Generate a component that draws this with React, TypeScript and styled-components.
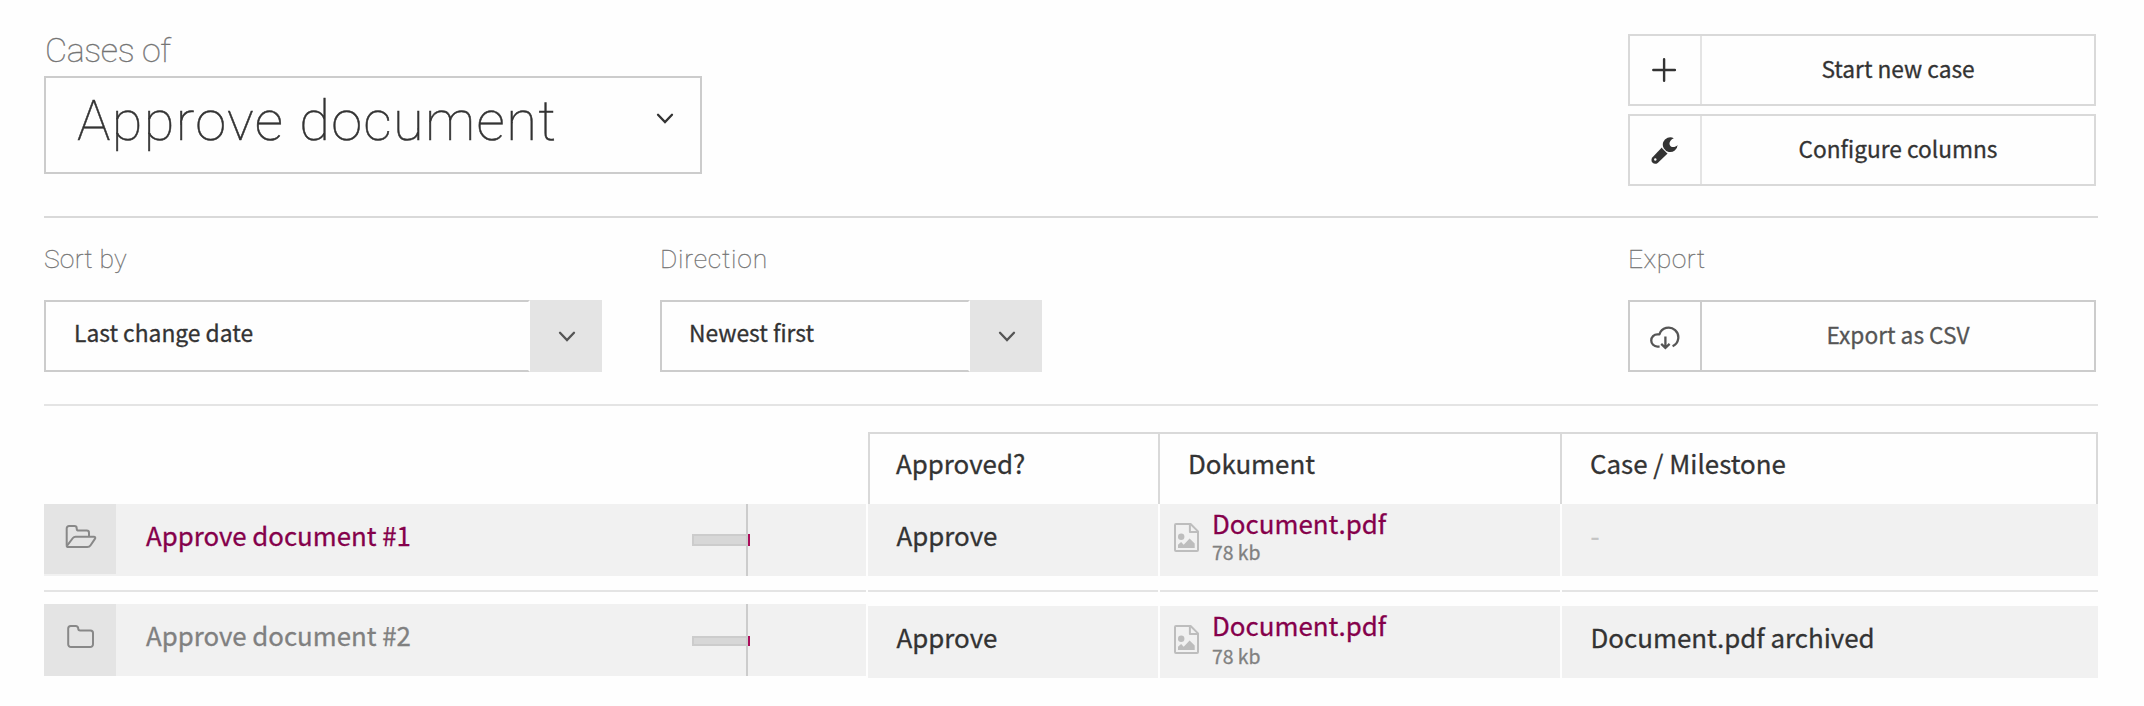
import React from 'react';
import styled, { createGlobalStyle } from 'styled-components';

const sans = '"Noto Sans CJK SC", "Open Sans", sans-serif';
const light = 'Roboto, "Open Sans", sans-serif';

const GlobalStyle = createGlobalStyle`
  * { box-sizing: border-box; }
  body { margin: 0; background: #fefefe; color: #333; font-family: ${sans}; }
  svg { display: block; flex: none; }
`;

const Page = styled.main`
  width: 2144px;
  height: 706px;
  padding: 0 46px 0 44px;
  overflow: hidden;
  -webkit-text-stroke: 0.3px currentColor;
`;

const Header = styled.header`
  display: flex;
  justify-content: space-between;
  height: 218px;
  border-bottom: 2px solid #d9d9d9;
`;

const TitleBlock = styled.div`
  width: 658px;
  padding-top: 28px;
`;

const TitleLabel = styled.div`
  height: 48px;
  padding-left: 1px;
  font: 100 34px/44px ${light};
  color: #6c6c6c;
  -webkit-text-stroke: 0.4px #7a7a7a;
  letter-spacing: -0.35px;
`;

const TitleSelect = styled.div`
  display: flex;
  align-items: center;
  justify-content: space-between;
  height: 98px;
  padding: 0 26px 8px 31px;
  border: 2px solid #ccc;
  font: 100 56px/80px ${light};
  letter-spacing: 1.35px;
  -webkit-text-stroke: 0.5px #333;
  white-space: nowrap;

  svg { margin-bottom: 5px; }
`;

const Actions = styled.div`
  display: flex;
  flex-direction: column;
  gap: 8px;
  width: 468px;
  margin-right: 2px;
  padding-top: 34px;
`;

const Button = styled.button<{ $strong?: boolean }>`
  display: flex;
  width: 468px;
  height: 72px;
  padding: 0;
  border: 2px solid ${p => (p.$strong ? '#ccc' : '#d9d9d9')};
  background: none;
  color: ${p => (p.$strong ? '#555' : '#333')};
  font: 400 22.7px/30px ${sans};
  -webkit-text-stroke: 0.3px currentColor;
`;

const ButtonIcon = styled.span<{ $strong?: boolean }>`
  display: flex;
  align-items: center;
  justify-content: center;
  width: 72px;
  height: 68px;
  border-right: 2px solid ${p => (p.$strong ? '#ccc' : '#e4e4e4')};
`;

const ButtonText = styled.span`
  flex: 1;
  padding-top: 18px;
  text-align: center;
`;

const Filters = styled.section`
  display: flex;
  height: 188px;
  border-bottom: 2px solid #e4e4e4;
`;

const Field = styled.div<{ $width: number; $gap?: number }>`
  width: ${p => p.$width}px;
  margin-right: ${p => p.$gap ?? 0}px;
  padding-top: 25px;
`;

const ExportField = styled(Field)`
  margin-left: auto;
`;

const FieldLabel = styled.div<{ $spacing?: number }>`
  height: 57px;
  font: 100 26.5px/32px ${light};
  color: #6c6c6c;
  -webkit-text-stroke: 0.3px #7a7a7a;
  letter-spacing: ${p => p.$spacing ?? 0}px;
`;

const Select = styled.div`
  display: flex;
  height: 72px;
`;

const SelectValue = styled.div<{ $pad: number }>`
  flex: 1;
  padding: 16px 0 0 ${p => p.$pad}px;
  border: 2px solid #ccc;
  border-right-color: #fefefe;
  font-size: 22.8px;
  line-height: 30px;
`;

const SelectArrow = styled.div`
  display: flex;
  align-items: center;
  justify-content: center;
  width: 72px;
  padding-left: 1px;
  background: #e4e4e4;
  color: #555;
`;

const Table = styled.section`
  padding-top: 26px;
`;

const HeadRow = styled.div`
  display: grid;
  grid-template-columns: 290px 402px 538px;
  margin-left: 824px;
  height: 72px;
  border-top: 2px solid #d9d9d9;
  border-right: 2px solid #d9d9d9;
`;

const HeadCell = styled.div<{ $pad: number }>`
  padding: 14px 0 0 ${p => p.$pad}px;
  border-left: 2px solid #d9d9d9;
  font-size: 25.9px;
  line-height: 30px;
`;

const Row = styled.div`
  display: grid;
  grid-template-columns: 822px 290px 400px 536px;
  column-gap: 2px;
`;

const Separator = styled(Row)`
  height: 2px;
  margin: 14px 0 12px;
`;

const SeparatorPart = styled.span`
  background: #e4e4e4;
`;

const Cell = styled.div<{ $drop?: boolean; $muted?: boolean }>`
  height: 72px;
  margin-top: ${p => (p.$drop ? 2 : 0)}px;
  padding: 16px 0 0 28.5px;
  background: #f1f1f1;
  color: ${p => (p.$muted ? '#c4c4c4' : '#333')};
  font-size: 25.9px;
  line-height: 30px;
`;

const NameCell = styled.div`
  display: flex;
  height: 72px;
  background: #f1f1f1;
`;

const FolderBox = styled.div<{ $open?: boolean }>`
  display: flex;
  align-items: center;
  justify-content: center;
  width: 72px;
  height: ${p => (p.$open ? 70 : 72)}px;
  padding: 0 0 ${p => (p.$open ? 4 : 6)}px ${p => (p.$open ? 2 : 0)}px;
  background: #e4e4e4;
  color: #888;
`;

const CaseName = styled.div<{ $open?: boolean }>`
  flex: 1;
  padding: 16px 0 0 30px;
  color: ${p => (p.$open ? '#85004b' : '#808080')};
  font-size: 25.8px;
  line-height: 30px;
`;

const Timeline = styled.div`
  display: flex;
  width: 58px;
  margin-right: 116px;
`;

const Span = styled.div<{ $top: number; $height: number }>`
  width: 54px;
  height: ${p => p.$height}px;
  margin-top: ${p => p.$top}px;
  border: 2px solid #ccc;
  border-right: 0;
  background: #d7d7d7;
`;

const Today = styled.div`
  width: 2px;
  background: #ccc;
`;

const Tick = styled.div<{ $top: number; $height: number }>`
  width: 2px;
  height: ${p => p.$height}px;
  margin-top: ${p => p.$top}px;
  background: #ab0c5a;
`;

const FileCell = styled(Cell)`
  display: flex;
  gap: 12px;
  padding: 4px 0 0 14px;
`;

const FileIconBox = styled.div`
  padding-top: 15px;
`;

const FileName = styled.div`
  color: #85004b;
`;

const FileSize = styled.div<{ $gap: number }>`
  margin-top: ${p => p.$gap}px;
  color: #808080;
  font-size: 19.4px;
  line-height: 23px;
`;

const Chevron = () => (
  <svg width="18" height="11" viewBox="0 0 18 11" fill="none" stroke="currentColor" strokeWidth="2.3" strokeLinecap="round">
    <path d="M2 1.8 9 9l7-7.2" />
  </svg>
);

const PlusIcon = () => (
  <svg width="30" height="30" viewBox="0 0 30 30" stroke="#333" strokeWidth="2.4" strokeLinecap="round">
    <path d="M14.1 4.2v21.6M3.3 15h21.6" />
  </svg>
);

const WrenchIcon = () => (
  <svg width="30" height="30" viewBox="0 0 30 30">
    <path d="M23.8 3.2A7.4 7.4 0 1 0 27.6 10C25.6 12.2 22.6 12.8 20.6 11.2 18.4 9.2 19.4 5 23.8 3.2Z" fill="#333" />
    <path d="m11.8 12.6 5.8 5.8-9.9 9.5c-3.6 2.8-8.2-1.6-5.4-5.4Z" fill="#333" />
    <path d="m11.8 12.6 6 6" stroke="#fefefe" strokeWidth="0.6" />
    <circle cx="5.3" cy="24.5" r="1.2" fill="#fefefe" />
  </svg>
);

const CloudIcon = () => (
  <svg width="30" height="30" viewBox="0 0 30 30" fill="none" stroke="#555" strokeWidth="2.3">
    <path d="M9.6 25.6H7.4a6.1 6.1 0 0 1 0-12.3h2A9.7 9.7 0 1 1 22.6 25.2" strokeLinejoin="round" />
    <path d="M15.4 15.4v11.4M11.2 22.8l4.2 4 4.2-4" />
  </svg>
);

const FolderOpenIcon = () => (
  <svg width="32" height="26" viewBox="0 0 32 26" fill="none" stroke="currentColor" strokeWidth="2" strokeLinejoin="round">
    <path d="M1.7 21.5V4.4a2.3 2.3 0 0 1 2.3-2.3h5.4a2.3 2.3 0 0 1 2.3 2.3 2.2 2.2 0 0 0 2.2 2.2h7.8a2.3 2.3 0 0 1 2.3 2.3v3.7" />
    <path d="M1.9 21.8 7.9 14a3.3 3.3 0 0 1 2.6-1.3h18.2c1.6 0 2 1 1.2 2.2l-4.3 6.3a4 4 0 0 1-3.3 1.9H3.5c-1.2 0-1.8-.6-1.8-1.6" />
  </svg>
);

const FolderIcon = () => (
  <svg width="28" height="26" viewBox="0 0 28 26" fill="none" stroke="currentColor" strokeWidth="2" strokeLinejoin="round">
    <path d="M2.2 20.3V4.6a2.5 2.5 0 0 1 2.5-2.5h5.1a2.4 2.4 0 0 1 2.4 2.4 2 2 0 0 0 2 2h10.3a2.5 2.5 0 0 1 2.5 2.5v11.3a2.8 2.8 0 0 1-2.8 2.8H5a2.8 2.8 0 0 1-2.8-2.8Z" />
  </svg>
);

const ImageFileIcon = () => (
  <svg width="26" height="30" viewBox="0 0 26 30" fill="none" stroke="#bdbdbd" strokeWidth="2" strokeLinejoin="round">
    <path d="M2 1h14.6L24 8.4V27a1 1 0 0 1-1 1H2a1 1 0 0 1-1-1V2a1 1 0 0 1 1-1Z" />
    <path d="M15.9 1.2v7.9h8" />
    <circle cx="7.2" cy="13.8" r="3.2" fill="#bdbdbd" stroke="none" />
    <path d="M4 25v-3.2l3.1-2.7 2.6 2.6 5.9-6.3 5.1 5.2V25Z" fill="#bdbdbd" stroke="none" />
  </svg>
);

interface CaseItem {
  name: string;
  open: boolean;
  milestone: string;
}

const cases: CaseItem[] = [
  { name: 'Approve document #1', open: true, milestone: '-' },
  { name: 'Approve document #2', open: false, milestone: 'Document.pdf archived' },
];

const CaseRow = ({ item }: { item: CaseItem }) => {
  const top = item.open ? 30 : 32;
  const height = item.open ? 12 : 10;
  return (
    <Row>
      <NameCell>
        <FolderBox $open={item.open}>{item.open ? <FolderOpenIcon /> : <FolderIcon />}</FolderBox>
        <CaseName $open={item.open}>{item.name}</CaseName>
        <Timeline>
          <Span $top={top} $height={height} />
          <Today />
          <Tick $top={top} $height={height} />
        </Timeline>
      </NameCell>
      <Cell $drop={!item.open}>Approve</Cell>
      <FileCell $drop={!item.open}>
        <FileIconBox>
          <ImageFileIcon />
        </FileIconBox>
        <div>
          <FileName>Document.pdf</FileName>
          <FileSize $gap={item.open ? 2 : 4}>78 kb</FileSize>
        </div>
      </FileCell>
      <Cell $drop={!item.open} $muted={item.milestone === '-'}>{item.milestone}</Cell>
    </Row>
  );
};

export default function App() {
  return (
    <Page>
      <GlobalStyle />
      <Header>
        <TitleBlock>
          <TitleLabel>Cases of</TitleLabel>
          <TitleSelect>
            Approve document
            <Chevron />
          </TitleSelect>
        </TitleBlock>
        <Actions>
          <Button>
            <ButtonIcon><PlusIcon /></ButtonIcon>
            <ButtonText>Start new case</ButtonText>
          </Button>
          <Button>
            <ButtonIcon><WrenchIcon /></ButtonIcon>
            <ButtonText>Configure columns</ButtonText>
          </Button>
        </Actions>
      </Header>
      <Filters>
        <Field $width={558} $gap={58}>
          <FieldLabel $spacing={0.2}>Sort by</FieldLabel>
          <Select>
            <SelectValue $pad={28}>Last change date</SelectValue>
            <SelectArrow><Chevron /></SelectArrow>
          </Select>
        </Field>
        <Field $width={382}>
          <FieldLabel $spacing={0.75}>Direction</FieldLabel>
          <Select>
            <SelectValue $pad={27}>Newest first</SelectValue>
            <SelectArrow><Chevron /></SelectArrow>
          </Select>
        </Field>
        <ExportField $width={468} $gap={2}>
          <FieldLabel $spacing={0.5}>Export</FieldLabel>
          <Button $strong>
            <ButtonIcon $strong><CloudIcon /></ButtonIcon>
            <ButtonText>Export as CSV</ButtonText>
          </Button>
        </ExportField>
      </Filters>
      <Table>
        <HeadRow>
          <HeadCell $pad={26}>Approved?</HeadCell>
          <HeadCell $pad={28}>Dokument</HeadCell>
          <HeadCell $pad={28}>Case / Milestone</HeadCell>
        </HeadRow>
        <CaseRow item={cases[0]} />
        <Separator>
          <SeparatorPart />
          <SeparatorPart />
          <SeparatorPart />
          <SeparatorPart />
        </Separator>
        <CaseRow item={cases[1]} />
      </Table>
    </Page>
  );
}
